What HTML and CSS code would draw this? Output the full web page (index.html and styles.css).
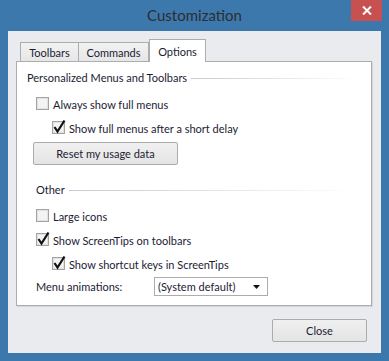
FILE: index.html
```html
<!DOCTYPE html>
<html lang="en">
<head>
  <meta charset="UTF-8">
  <title>Customization</title>
  <link rel="stylesheet" href="styles.css">
</head>
<body>
  <div class="window">
    <div class="titlebar">
      <span class="title">Customization</span>
      <button class="close-x" aria-label="Close">
        <svg width="10" height="9" viewBox="0 0 10 9"><path d="M1 0.5 L9 8.5 M9 0.5 L1 8.5" stroke="#fff" stroke-width="2"/></svg>
      </button>
    </div>
    <div class="client">
      <div class="tabs">
        <div class="tab tab-toolbars">Toolbars</div>
        <div class="tab tab-commands">Commands</div>
        <div class="tab tab-options active">Options</div>
      </div>
      <div class="panel">
        <div class="group-head head-first"><span>Personalized Menus and Toolbars</span><i class="rule"></i></div>

        <label class="check lvl1">
          <svg class="box" width="14" height="14" viewBox="0 0 14 14"><rect x="0.5" y="1.5" width="12" height="12" fill="#f3f3f3" stroke="#a3a3a3"/><rect x="1.5" y="2.5" width="10" height="10" fill="none" stroke="#e2e2e2"/></svg>
          <span>Always show full menus</span>
        </label>
        <label class="check lvl2">
          <svg class="box" width="14" height="14" viewBox="0 0 14 14"><rect x="0.5" y="1.5" width="12" height="12" fill="#f3f3f3" stroke="#a3a3a3"/><rect x="1.5" y="2.5" width="10" height="10" fill="none" stroke="#e2e2e2"/><path d="M2.5 7 L5.5 11.5 L12.5 0.5" fill="none" stroke="#111" stroke-width="2.2"/></svg>
          <span>Show full menus after a short delay</span>
        </label>
        <button class="btn btn-reset">Reset my usage data</button>

        <div class="group-head head-other"><span>Other</span><i class="rule"></i></div>

        <label class="check lvl1 first-other">
          <svg class="box" width="14" height="14" viewBox="0 0 14 14"><rect x="0.5" y="1.5" width="12" height="12" fill="#f3f3f3" stroke="#a3a3a3"/><rect x="1.5" y="2.5" width="10" height="10" fill="none" stroke="#e2e2e2"/></svg>
          <span>Large icons</span>
        </label>
        <label class="check lvl1">
          <svg class="box" width="14" height="14" viewBox="0 0 14 14"><rect x="0.5" y="1.5" width="12" height="12" fill="#f3f3f3" stroke="#a3a3a3"/><rect x="1.5" y="2.5" width="10" height="10" fill="none" stroke="#e2e2e2"/><path d="M2.5 7 L5.5 11.5 L12.5 0.5" fill="none" stroke="#111" stroke-width="2.2"/></svg>
          <span>Show ScreenTips on toolbars</span>
        </label>
        <label class="check lvl2">
          <svg class="box" width="14" height="14" viewBox="0 0 14 14"><rect x="0.5" y="1.5" width="12" height="12" fill="#f3f3f3" stroke="#a3a3a3"/><rect x="1.5" y="2.5" width="10" height="10" fill="none" stroke="#e2e2e2"/><path d="M2.5 7 L5.5 11.5 L12.5 0.5" fill="none" stroke="#111" stroke-width="2.2"/></svg>
          <span>Show shortcut keys in ScreenTips</span>
        </label>

        <div class="anim-row">
          <span class="anim-label">Menu animations:</span>
          <div class="combo">
            <span>(System default)</span>
            <svg width="7" height="4" viewBox="0 0 7 4"><path d="M0 0 H7 L3.5 4 Z" fill="#111"/></svg>
          </div>
        </div>
      </div>
      <div class="footer">
        <button class="btn btn-close">Close</button>
      </div>
    </div>
  </div>
</body>
</html>
```

FILE: styles.css
```css
body {
  margin: 0;
  background: #3d78ad;
  font-family: Lato, "Noto Sans", Arial, sans-serif;
  font-size: 11px;
  color: #1b1b33;
}

.window {
  width: 389px;
  height: 361px;
  display: flex;
  flex-direction: column;
}

.titlebar {
  position: relative;
  height: 31px;
  display: flex;
  align-items: center;
  justify-content: center;
}

.title {
  font-size: 15px;
  color: #2d2d30;
  margin-top: -1px;
}

.close-x {
  position: absolute;
  top: 0;
  right: 7px;
  width: 31px;
  height: 21px;
  padding: 0;
  border: none;
  background: #c75050;
  display: flex;
  align-items: center;
  justify-content: center;
}

.client {
  margin: 0 8px 8px 8px;
  height: 322px;
  background: #eaebef;
  padding: 8px 0 0 8px;
  box-sizing: border-box;
}

.tabs {
  display: flex;
  align-items: flex-end;
  padding-left: 4px;
  height: 22px;
  position: relative;
  z-index: 1;
}

.tab {
  height: 19px;
  box-sizing: border-box;
  border: 1px solid #adadad;
  border-bottom: none;
  background: linear-gradient(#f2f2f2, #e6e6e6);
  display: flex;
  align-items: center;
  justify-content: center;
  line-height: 1;
  padding-top: 1px;
}

.tab-toolbars { width: 59px; }
.tab-commands { width: 70px; border-left: none; }

.tab-options {
  width: 57px;
  height: 23px;
  margin-bottom: -1px;
  background: #fff;
  padding-top: 0;
}

.panel {
  width: 356px;
  height: 245px;
  box-sizing: border-box;
  border: 1px solid #adadad;
  background: #fff;
  box-shadow: 1px 1px 0 #d6d6da;
  display: flex;
  flex-direction: column;
}

.group-head {
  display: flex;
  align-items: center;
  height: 24px;
  gap: 4px;
}

.head-first {
  height: 30px;
  padding-left: 10px;
}

.head-other {
  margin-top: 12px;
  padding-left: 19px;
}

.rule {
  flex: 1;
  height: 1px;
  margin: 2px 12px 0 0;
  background: linear-gradient(to right, #c8c9d2, #eeeef2 70%, rgba(255, 255, 255, 0));
}

.check {
  display: flex;
  align-items: center;
  height: 24px;
  gap: 3px;
}

.check .box {
  margin-top: -2px;
  overflow: visible;
}

.lvl1 { padding-left: 19px; }
.lvl2 { padding-left: 35px; }

.first-other { margin-top: 3px; }

.btn {
  font: inherit;
  color: inherit;
  border: 1px solid #acacac;
  border-radius: 2px;
  background: linear-gradient(#f0f0f0, #e4e4e4);
  padding: 0;
}

.btn-reset {
  margin: 2px 0 0 16px;
  width: 145px;
  height: 23px;
}

.anim-row {
  display: flex;
  align-items: center;
  margin-top: 1px;
  padding-left: 19px;
}

.anim-label {
  width: 118px;
}

.combo {
  width: 114px;
  height: 19px;
  box-sizing: border-box;
  border: 1px solid #acacac;
  display: flex;
  align-items: center;
  justify-content: space-between;
  padding: 0 7px 0 3px;
}

.footer {
  display: flex;
  justify-content: flex-end;
  padding: 13px 14px 0 0;
}

.btn-close {
  width: 95px;
  height: 23px;
}
```
